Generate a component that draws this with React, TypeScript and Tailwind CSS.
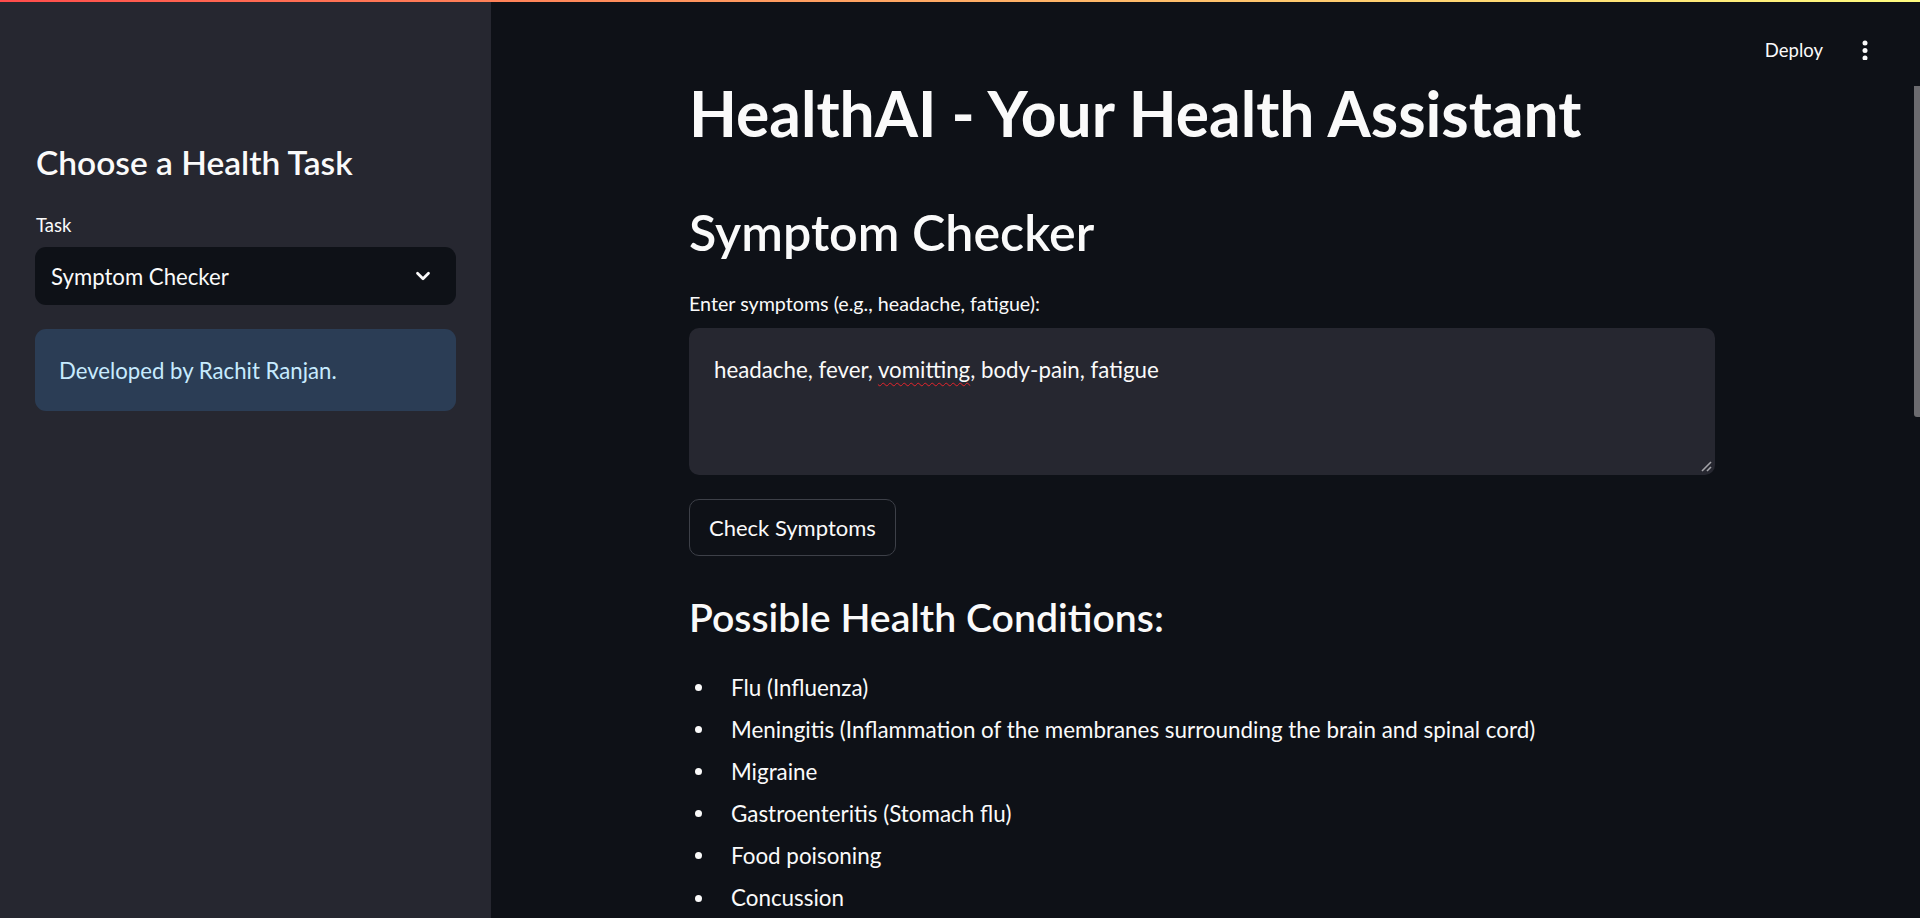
import { ChevronDown } from 'lucide-react';

const conditions = [
  'Flu (Influenza)',
  'Meningitis (Inflammation of the membranes surrounding the brain and spinal cord)',
  'Migraine',
  'Gastroenteritis (Stomach flu)',
  'Food poisoning',
  'Concussion',
];

function Sidebar() {
  return (
    <aside className="w-[491px] shrink-0 bg-[#262730] px-[35px] pt-[140px]">
      <h2 className="pl-px text-[33.5px] leading-[1.2] font-semibold text-[#fafafa]">Choose a Health Task</h2>

      <label className="mt-[32px] block pl-px text-[18.5px] leading-[22px] text-[#fafafa]">Task</label>
      <div className="mt-[11px] flex h-[58px] items-center justify-between rounded-[11px] bg-[#0e1117] pr-[22px] pl-[16px]">
        <span className="text-[22.2px] text-[#fafafa]">Symptom Checker</span>
        <ChevronDown className="h-[22px] w-[22px] text-[#fafafa]" strokeWidth={3} />
      </div>

      <div className="mt-[24px] flex h-[82px] items-center rounded-[11px] bg-[#2b3d55] px-[24px]">
        <p className="text-[22.2px] text-[#c7ebff]">Developed by Rachit Ranjan.</p>
      </div>
    </aside>
  );
}

function Header() {
  return (
    <div className="flex h-[74px] items-start justify-end pt-[37px] pr-[52px]">
      <button className="text-[18.5px] leading-[22px] text-[#fafafa]">Deploy</button>
      <svg className="mt-[1px] ml-[39px]" width="6" height="20" viewBox="0 0 6 20" fill="#fafafa">
        <circle cx="3" cy="3" r="2.5" />
        <circle cx="3" cy="10.5" r="2.5" />
        <circle cx="3" cy="18" r="2.5" />
      </svg>
    </div>
  );
}

export default function App() {
  return (
    <div className="flex h-[918px] flex-col overflow-hidden bg-[#0e1117] font-[Lato,sans-serif] text-[#fafafa]">
      {/* streamlit top decoration */}
      <div className="h-[2px] shrink-0 bg-linear-to-r from-[#ff4b4b] to-[#fffd80]" />

      <div className="flex min-h-0 flex-1">
        <Sidebar />

        <main className="relative flex-1">
          <Header />

          <div className="w-[1224px] pl-[198px]">
            <h1 className="text-[62.3px] leading-[1.2] font-bold">HealthAI - Your Health Assistant</h1>

            <h2 className="mt-[51px] text-[50.2px] leading-[1.2] font-semibold">Symptom Checker</h2>

            <label className="mt-[30px] block text-[19.7px] leading-[24px]">Enter symptoms (e.g., headache, fatigue):</label>
            <div className="relative mt-[12px] h-[147px] rounded-[10px] bg-[#262730] px-[25px] pt-[24px] text-[22.3px] leading-[1.6]">
              headache, fever,{' '}
              <span className="underline decoration-[#e5242b] decoration-wavy decoration-1 underline-offset-[4px]">vomitting</span>, body-pain,
              fatigue
              <svg className="absolute right-[3px] bottom-[3px]" width="11" height="11" viewBox="0 0 11 11" stroke="#a3a3a8" strokeWidth="1.6">
                <line x1="1" y1="10" x2="10" y2="1" />
                <line x1="6" y1="10" x2="10" y2="6" />
              </svg>
            </div>

            <button className="mt-[24px] h-[57px] rounded-[10px] border border-[#3d4048] bg-[#0e1117] px-[19px] text-[22px]">
              Check Symptoms
            </button>

            <h3 className="mt-[37px] text-[39.2px] leading-[1.2] font-semibold">Possible Health Conditions:</h3>

            <ul className="mt-[30px] flex flex-col gap-[6.9px]">
              {conditions.map((c) => (
                <li key={c} className="flex items-center text-[22.4px] leading-[35.2px]">
                  <span className="ml-[6px] h-[7px] w-[7px] shrink-0 rounded-full bg-[#fafafa]" />
                  <span className="ml-[29px]">{c}</span>
                </li>
              ))}
            </ul>
          </div>

          {/* page scrollbar thumb */}
          <div className="absolute top-[84px] right-0 h-[331px] w-[6px] rounded-bl-[3px] bg-[#6b6b6f]" />
        </main>
      </div>
    </div>
  );
}
